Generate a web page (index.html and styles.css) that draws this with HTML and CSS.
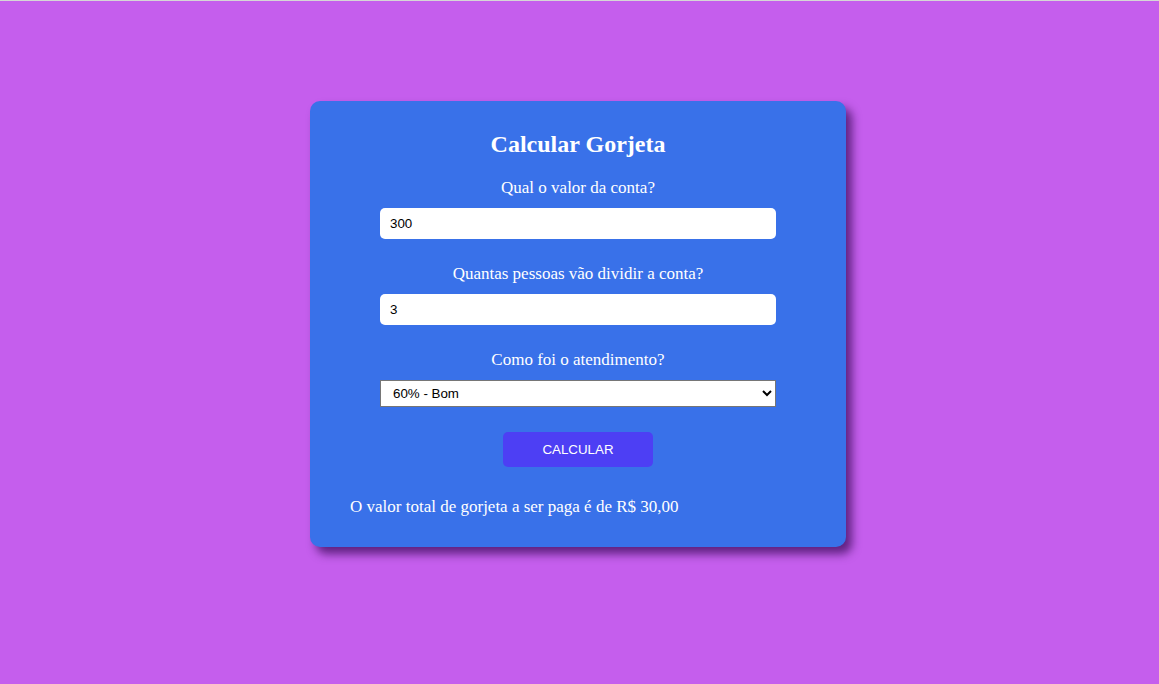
FILE: index.html
```html
<!DOCTYPE html>
<html lang="pt-BR">
<head>
<meta charset="utf-8">
<title>Calcular Gorjeta</title>
<link rel="stylesheet" href="styles.css">
</head>
<body>
<main class="card">
  <h2 class="title">Calcular Gorjeta</h2>
  <div class="field">
    <label class="label" for="valor">Qual o valor da conta?</label>
    <input class="input" id="valor" type="text" value="300">
  </div>
  <div class="field">
    <label class="label" for="pessoas">Quantas pessoas vão dividir a conta?</label>
    <input class="input" id="pessoas" type="text" value="3">
  </div>
  <div class="field">
    <label class="label" for="servico">Como foi o atendimento?</label>
    <select class="select" id="servico">
      <option>60% - Bom</option>
    </select>
  </div>
  <button class="button" type="button">CALCULAR</button>
  <p class="result">O valor total de gorjeta a ser paga é de R$ 30,00</p>
</main>
</body>
</html>
```
FILE: styles.css
```css
html, body {
  margin: 0;
  padding: 0;
}
body {
  background: #c55eed;
  border-top: 1px solid #d6d6d6;
  min-height: 683px;
  font-family: "Liberation Serif", "Times New Roman", serif;
  display: flex;
  flex-direction: column;
  align-items: center;
}
.card {
  box-sizing: border-box;
  width: 536px;
  margin-top: 100px;
  margin-right: 3px;
  padding: 30px 40px 31px;
  background: #3971e9;
  border-radius: 10px;
  box-shadow: 6px 7px 10px rgba(40, 0, 70, 0.65);
  color: #fff;
  display: flex;
  flex-direction: column;
  align-items: center;
}
.title {
  margin: 0 0 22px;
  font-size: 24px;
  line-height: 26px;
  font-weight: bold;
}
.field {
  display: flex;
  flex-direction: column;
  align-items: center;
  margin-bottom: 26px;
}
.label {
  font-size: 17px;
  line-height: 18px;
  margin-bottom: 11px;
}
.input {
  box-sizing: border-box;
  width: 396px;
  height: 31px;
  border: none;
  border-radius: 5px;
  padding: 0 10px;
  font-family: "Liberation Sans", Arial, sans-serif;
  font-size: 13.33px;
  color: #000;
  background: #fff;
}
.select {
  box-sizing: border-box;
  width: 396px;
  height: 27px;
  border: 1px solid #767676;
  border-radius: 0;
  padding: 0 8px;
  font-family: "Liberation Sans", Arial, sans-serif;
  font-size: 13.33px;
  color: #000;
  background: #fff;
}
.field:nth-of-type(3) {
  margin-bottom: 25px;
}
.button {
  width: 150px;
  height: 35px;
  border: none;
  border-radius: 5px;
  background: #4d3ff4;
  color: #fff;
  font-family: "Liberation Sans", Arial, sans-serif;
  font-size: 13.33px;
  cursor: pointer;
}
.result {
  align-self: stretch;
  margin: 31px 0 0;
  font-size: 17px;
  line-height: 18px;
}
```
